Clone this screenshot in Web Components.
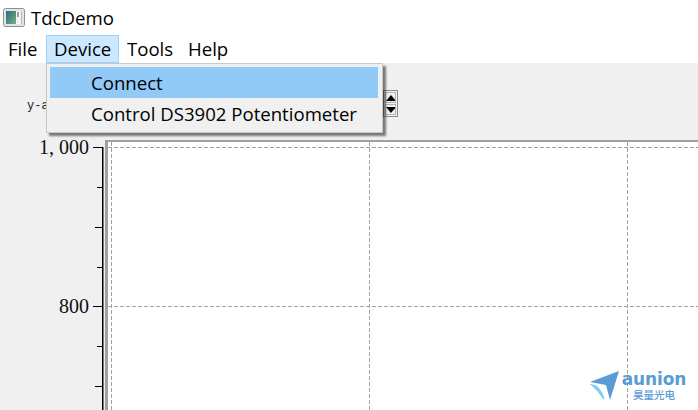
<!DOCTYPE html>
<html>
<head>
<meta charset="utf-8">
<title>TdcDemo</title>
<style>
  html, body { margin: 0; height: 100%; overflow: hidden; background: #fff; }
</style>
</head>
<body>
<tdc-window></tdc-window>
<script>
class TdcTitle extends HTMLElement {
  constructor() {
    super();
    this.attachShadow({ mode: "open" }).innerHTML = `
      <style>
        :host { display: flex; align-items: center; gap: 6px; height: 35px; padding-left: 3px; background: #fff;
                font: 18.6px "Open Sans", sans-serif; color: #000; }
        svg { display: block; }
      </style>
      <svg width="22" height="19" viewBox="0 0 22 19">
        <defs><linearGradient id="g" x1="0" y1="0" x2="1" y2="1">
          <stop offset="0" stop-color="#2a6b8c"/><stop offset="1" stop-color="#74b07c"/></linearGradient></defs>
        <rect x=".5" y=".5" width="21" height="18" rx="2" fill="#e4e4e4" stroke="#8f8f8f"/>
        <rect x="3" y="3" width="10" height="13" fill="url(#g)"/>
        <rect x="13" y="3" width="6" height="13" fill="#f4f4f4"/>
        <rect x="14" y="4" width="2" height="5" fill="#8fa8a4"/>
        <rect x="18" y="3" width="1" height="13" fill="#b8b8b8"/>
      </svg>
      <span><slot></slot></span>`;
  }
}

class TdcMenubar extends HTMLElement {
  constructor() {
    super();
    this.attachShadow({ mode: "open" }).innerHTML = `
      <style>
        :host { display: flex; height: 28px; background: #fff;
                font: 18.6px "Open Sans", sans-serif; color: #000; }
        ::slotted(span) { display: flex; align-items: center; padding: 0 0 2px 7px; border: 1px solid transparent; box-sizing: border-box; }
        ::slotted(:nth-child(1)) { width: 46px; }
        ::slotted(:nth-child(2)) { width: 73px; }
        ::slotted(:nth-child(3)) { width: 61px; }
        ::slotted(.open) { background: #cce8ff; border-color: #99d1ff; }
      </style>
      <slot></slot>`;
  }
}

class TdcMenu extends HTMLElement {
  constructor() {
    super();
    this.attachShadow({ mode: "open" }).innerHTML = `
      <style>
        :host { position: absolute; left: 46px; top: 63px; width: 337px; height: 70px; box-sizing: border-box;
                padding: 3px 4px 3px 3px; background: #f0f0f0; border: 1px solid #c8c8c8;
                box-shadow: 3px 3px 2px rgba(0,0,0,.5);
                font: 18.6px "Open Sans", sans-serif; color: #000; }
        ::slotted(div) { height: 31px; display: flex; align-items: center; padding-left: 41px; }
        ::slotted(.on) { background: #91c9f7; }
      </style>
      <slot></slot>`;
  }
}

class TdcToolbar extends HTMLElement {
  constructor() {
    super();
    this.attachShadow({ mode: "open" }).innerHTML = `
      <style>
        :host { display: flex; height: 74px; box-sizing: border-box; padding: 27px 0 0 27px; background: #f0f0f0; }
        .label { font: 12px "Liberation Mono", monospace; margin-top: 9px; width: 356px; color: #222; }
        .spin { width: 15px; height: 27px; box-sizing: border-box; border: 1px solid #8c8c8c; background: #f0f0f0;
                display: flex; flex-direction: column; padding: 1px; gap: 1px; }
        .spin div { flex: 1; border: 1px solid #b4b4b4; display: flex; align-items: center; justify-content: center; }
        svg { display: block; }
      </style>
      <div class="label"><slot></slot></div>
      <div class="spin">
        <div><svg width="10" height="6"><path d="M5 0L10 6H0z"/></svg></div>
        <div><svg width="10" height="6"><path d="M0 0H10L5 6z"/></svg></div>
      </div>`;
  }
}

class TdcPlot extends HTMLElement {
  constructor() {
    super();
    // y is counted from the top of the svg, which sits at page y 137, x 89
    const ticks = [[10, 9], [50, 5], [90, 7], [130, 5], [169, 9], [209, 5], [249, 7]];
    const tickLines = ticks.map(([y, l]) =>
      `<rect x="${13 - l}" y="${y}" width="${l}" height="1"/>`).join("");
    this.attachShadow({ mode: "open" }).innerHTML = `
      <style>
        :host { display: flex; flex: 1; background: #f0f0f0; }
        .labels { width: 89px; text-align: right; font: 20px/20px "Liberation Serif", serif; color: #111; }
        .labels div + div { margin-top: 139px; }
        svg { display: block; }
      </style>
      <div class="labels"><div>1, 000</div><div>800</div></div>
      <svg width="609" height="273" viewBox="0 0 609 273">
        <rect x="17" y="3" width="592" height="270" fill="#fff"/>
        <rect x="16" y="3" width="593" height="2" fill="#a0a0a0"/>
        <rect x="16" y="3" width="3" height="270" fill="#a0a0a0"/>
        <g stroke="#a0a0a0" stroke-dasharray="4 2" fill="none">
          <path d="M19 10.5H609"/><path d="M19 169.5H609"/>
          <path d="M22.5 5V273"/><path d="M280.5 5V273"/><path d="M538.5 5V273"/>
        </g>
        <g fill="#000">${tickLines}<rect x="13" y="10" width="1.5" height="263"/></g>
      </svg>`;
  }
}

class TdcLogo extends HTMLElement {
  constructor() {
    super();
    this.attachShadow({ mode: "open" }).innerHTML = `
      <style>
        :host { position: absolute; left: 589px; top: 370px; display: flex; gap: 2px; }
        .txt { display: flex; flex-direction: column; align-items: center; color: #5b9bd5; width: 66px; }
        .en { font: bold 17px/19px "DejaVu Sans", sans-serif; letter-spacing: -.1px; }
        .cn { font: 500 10.5px/12px "Noto Sans CJK SC", sans-serif; }
        svg { display: block; margin-top: 1px; }
      </style>
      <svg width="30" height="30" viewBox="0 0 30 30">
        <path d="M1 11L30 0L21 29L17 14Z" fill="#5b9bd5"/>
        <path d="M3 14Q11 15 15 28Q10 20 3 14Z" fill="#7fd0f0" stroke="#7fd0f0" stroke-width="1.5"/>
      </svg>
      <div class="txt"><span class="en">aunion</span><span class="cn">昊量光电</span></div>`;
  }
}

class TdcWindow extends HTMLElement {
  constructor() {
    super();
    this.attachShadow({ mode: "open" }).innerHTML = `
      <style>
        :host { display: flex; flex-direction: column; position: relative; width: 698px; height: 410px; overflow: hidden; }
      </style>
      <tdc-title>TdcDemo</tdc-title>
      <tdc-menubar>
        <span>File</span><span class="open">Device</span><span>Tools</span><span>Help</span>
      </tdc-menubar>
      <tdc-toolbar>y-axis</tdc-toolbar>
      <tdc-plot></tdc-plot>
      <tdc-menu>
        <div class="on">Connect</div>
        <div>Control DS3902 Potentiometer</div>
      </tdc-menu>
      <tdc-logo></tdc-logo>`;
  }
}

customElements.define("tdc-title", TdcTitle);
customElements.define("tdc-menubar", TdcMenubar);
customElements.define("tdc-menu", TdcMenu);
customElements.define("tdc-toolbar", TdcToolbar);
customElements.define("tdc-plot", TdcPlot);
customElements.define("tdc-logo", TdcLogo);
customElements.define("tdc-window", TdcWindow);
</script>
</body>
</html>
